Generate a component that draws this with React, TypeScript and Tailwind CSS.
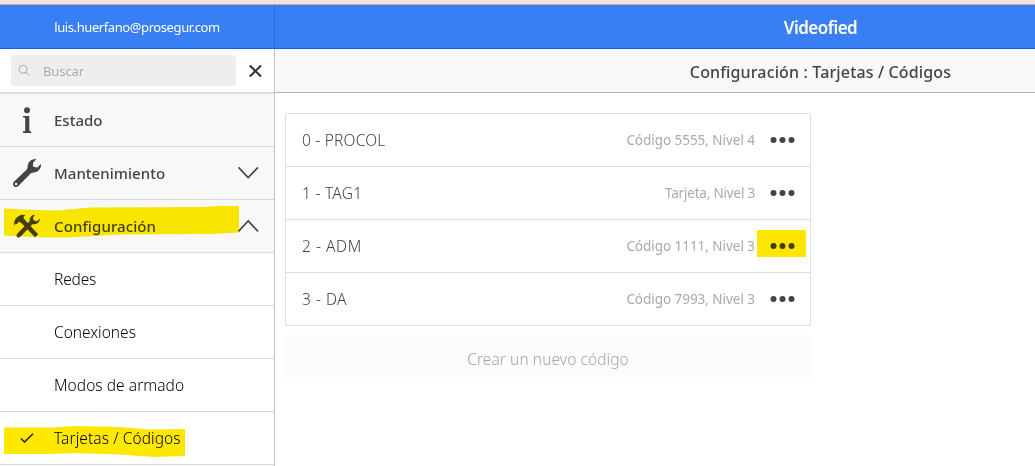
import React from "react";

const Chevron = ({ up }: { up?: boolean }) => (
  <svg className="block h-[14px] w-[22px]" viewBox="0 0 22 14" fill="none" stroke="#444" strokeWidth="1.6">
    <path d={up ? "M1.500 12.400L11.200 2L21 12.400" : "M1.500 1.400L11.200 11.600L21 1.400"} />
  </svg>
);

const InfoIcon = () => (
  <svg className="block h-[28px] w-[10px]" viewBox="0 0 10 28" fill="#444">
    <circle cx="5" cy="4.200" r="3" />
    <path d="M1 10H7.300V25L9.200 25.600V27H1V25.600L3.200 25V11.800L1 11.300Z" />
  </svg>
);

const WrenchIcon = () => (
  <svg className="block h-[28px] w-[28px]" viewBox="0 0 28 28">
    <path
      fill="#444"
      d="M22.2.1C18 .2 14.700 3.500 14.700 7.300C14.700 8.900 14.300 10 13.200 11L1 22.700C-.3 24 -.3 26 .9 27.200C2.100 28.300 4.100 28.200 5.300 27L17.200 14.900C18.100 14 19.200 13.600 20.800 13.500C24.900 13.200 28 10 28 5.800C28 5.300 27.800 4.900 27.500 5.200L24.700 8.200C24.400 8.500 24 8.600 23.600 8.500L20.700 7.800C20.200 7.700 19.900 7.300 19.900 6.900L20 4.500C20 4 20.200 3.700 20.500 3.300L22.800.8C23.100.400 22.900.1 22.200.1Z"
    />
    <circle cx="3.100" cy="25" r="1.200" fill="#f8f8f8" />
  </svg>
);

const ToolsIcon = () => (
  <svg className="block h-[24px] w-[26px]" viewBox="0 0 26 24" fill="#444">
    <path d="M.2 12V8.200C.8 5 2.800 2.800 5.400 1.700C7.400.7 9.400.4 11.300 1.300L9.900 2.500C9.300 3.200 9.500 4 10.100 4.700L12 7.300L24.200 20.200L21 23.300L8.500 10.300L6.200 8.300C4.500 7.600 3.700 8.600 3.100 10.300L1.600 9.800Z" />
    <path d="M21 .7C17.500.8 15.200 3.800 15.800 7.100L3.200 19.700C2.200 20.900 2.300 22.300 3.200 23.100C4.200 23.900 5.500 23.700 6.400 22.800L18.500 10.200C22 11 25.700 8.500 26 4.500L22.800 7.200L19.700 6.400L19 3.600Z" />
  </svg>
);

const Dots = () => (
  <svg className="block h-[7px] w-[25px]" viewBox="0 0 25 7" fill="#444">
    <circle cx="3.500" cy="3" r="3" />
    <circle cx="12.500" cy="3" r="3" />
    <circle cx="21.500" cy="3" r="3" />
  </svg>
);

function Section({ icon, label, trail }: { icon: React.ReactNode; label: React.ReactNode; trail?: React.ReactNode }) {
  return (
    <div className="flex h-[53px] shrink-0 items-center border-b border-[#d8d8d8] bg-[#f8f8f8] pr-[15px]">
      <span className="flex w-[54px] shrink-0 justify-center">{icon}</span>
      <span className="flex-1">{label}</span>
      {trail}
    </div>
  );
}

const rows = [
  { name: "0 - PROCOL", nameClass: "tracking-[0.2px]", info: "Código 5555, Nivel 4", infoClass: "tracking-[-0.04px]" },
  { name: "1 - TAG1", nameClass: "tracking-[0.25px]", info: "Tarjeta, Nivel 3", infoClass: "tracking-[-0.2px]" },
  { name: "2 - ADM", nameClass: "tracking-[0.55px]", info: "Código 1111, Nivel 3", infoClass: "tracking-[-0.04px]", marked: true },
  { name: "3 - DA", nameClass: "tracking-[0.5px]", info: "Código 7993, Nivel 3", infoClass: "tracking-[-0.04px]" },
];

const subItems = [
  { label: "Redes", tracking: "tracking-[-0.15px]" },
  { label: "Conexiones", tracking: "tracking-[0px]" },
  { label: "Modos de armado", tracking: "tracking-[0.06px]" },
  { label: "Tarjetas / Códigos", tracking: "tracking-[0.08px]", active: true },
];

export default function App() {
  return (
    <div className="flex h-[466px] w-[1035px] flex-col overflow-hidden bg-white font-['Noto_Sans','Open_Sans',sans-serif] text-[#444]">
      <div className="h-[5px] shrink-0 border-b border-[#b9b0ad] bg-[#f5e1da]" />
      <div className="flex min-h-0 flex-1">
        <aside className="relative flex w-[275px] shrink-0 flex-col">
          <div className="flex h-[44px] shrink-0 items-center justify-center border-b border-r border-b-[#0c60ee] border-r-[#2f68cc] bg-[#387ef5] pt-[2px] text-[13px] tracking-[-0.41px] text-white">
            <span>luis.huerfano@prosegur.com</span>
          </div>
          <div className="flex min-h-0 flex-1 flex-col border-r border-[#c4c4c4]">
            <div className="flex h-[45px] shrink-0 items-center border-b-2 border-[#dcdcdc] pl-[11px]">
              <div className="flex h-[31px] w-[225px] items-center rounded-[4px] bg-[#eee] pl-[7px] text-[13px] text-[#aaa]">
                <svg className="h-[12px] w-[12px]" viewBox="0 0 12 12" fill="none" stroke="#aaa">
                  <circle cx="5" cy="4.300" r="4" />
                  <path d="M8 7.300L11.600 10.600" />
                </svg>
                <span className="ml-[13px] mt-[2px] tracking-[-0.1px]">Buscar</span>
              </div>
              <svg className="ml-[13px] h-[12px] w-[13px]" viewBox="0 0 13 12" stroke="#333" strokeWidth="2.100">
                <path d="M.8.500L12 11.500M12 .5L.8 11.500" />
              </svg>
            </div>
            <nav className="flex flex-col">
              <div className="flex flex-col text-[15px] font-medium">
                <Section icon={<InfoIcon />} label={<span>Estado</span>} />
                <Section icon={<WrenchIcon />} label={<span className="tracking-[0.03px]">Mantenimiento</span>} trail={<Chevron />} />
                <Section icon={<ToolsIcon />} label={<span className="tracking-[0.1px]">Configuración</span>} trail={<Chevron up />} />
              </div>
              {subItems.map((s) => (
                <div key={s.label} className="flex h-[53px] shrink-0 items-center border-b border-[#d8d8d8] text-[15.500px] text-black">
                  <span className="flex w-[54px] justify-center">
                    {s.active && (
                      <svg className="h-[10px] w-[14px]" viewBox="0 0 14 10" fill="none" stroke="#222" strokeWidth="1.500">
                        <path d="M1 5.500L4.500 9L13 .7" />
                      </svg>
                    )}
                  </span>
                  <span className={`pt-[2px] font-light ${s.tracking}`}>{s.label}</span>
                </div>
              ))}
            </nav>
          </div>
          <svg className="pointer-events-none absolute left-0 top-0 h-[461px] w-[275px] mix-blend-multiply" viewBox="0 5 275 461">
            <path fill="#ffed00" d="M4 208.500L35 210L58 210.500L90 207.500L205 207L220 206L239 206V232.500L210 234L120 234.500L70 237.500L45 237.500L4 235.500Z" />
            <path fill="#ffe800" d="M4 427.500L50 427.500L75 426L120 427L150 429.500L185 429V456L155 457L120 454.500L75 453L50 454H4Z" />
          </svg>
        </aside>
        <main className="flex min-w-0 flex-1 flex-col">
          <div className="flex h-[44px] shrink-0 items-center justify-center border-b border-[#0c60ee] bg-[#387ef5] pl-[331px] pt-[2px] text-[17px] font-semibold tracking-[-0.55px] text-white">
            <span>Videofied</span>
          </div>
          <div className="flex h-[44px] shrink-0 items-center justify-center border-b border-[#b2b2b2] bg-[#f8f8f8] pl-[331px] pt-[2px] text-[16px] font-medium tracking-[0.14px]">
            <span>Configuración : Tarjetas / Códigos</span>
          </div>
          <div className="flex w-[536px] flex-col pl-[10px] pt-[20px]">
            <div className="flex flex-col rounded-t-[2px] border border-[#ddd]">
              {rows.map((r) => (
                <div key={r.name} className="flex h-[53px] items-center border-b border-[#ddd] pl-[16px] pr-[15px] text-[15.500px] last:h-[52px] last:border-b-0">
                  <span className={`flex-1 pt-[2px] font-light ${r.nameClass}`}>{r.name}</span>
                  <span className={`mr-[15px] text-[13.500px] text-[#aaa] ${r.infoClass}`}>{r.info}</span>
                  <span className="relative">
                    <Dots />
                    {r.marked && <span className="absolute -left-[13px] -top-[13px] h-[27px] w-[49px] bg-[#ffe600] mix-blend-multiply" />}
                  </span>
                </div>
              ))}
            </div>
            <button className="mt-[9px] h-[47px] rounded-[4px] bg-[#fcfcfc] pt-[3px] text-[15.500px] font-light tracking-[0.08px] text-[#a4a4a4]">Crear un nuevo código</button>
          </div>
        </main>
      </div>
    </div>
  );
}
